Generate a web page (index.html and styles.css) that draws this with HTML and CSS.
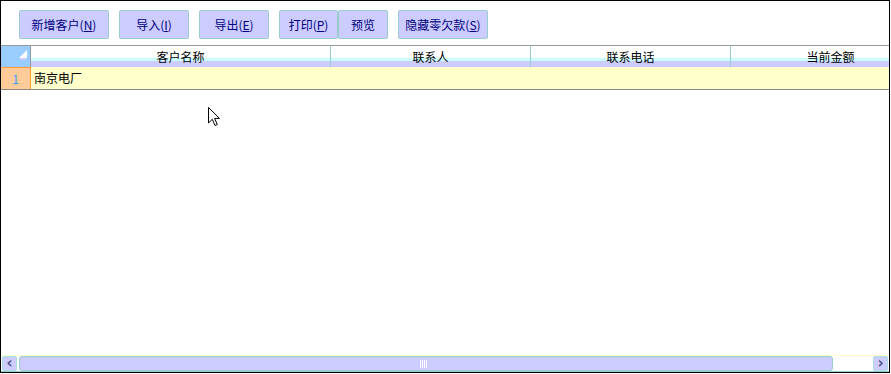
FILE: index.html
```html
<!DOCTYPE html>
<html lang="zh-CN">
<head>
  <meta charset="UTF-8" />
  <title>客户管理</title>
  <link rel="stylesheet" href="styles.css">
</head>
<body>
  <div class="window">
    <div class="toolbar">
      <button class="btn w90">新增客户(<u>N</u>)</button>
      <button class="btn w70">导入(<u>I</u>)</button>
      <button class="btn w70">导出(<u>E</u>)</button>
      <button class="btn w59 joined">打印(<u>P</u>)</button>
      <button class="btn w50">预览</button>
      <button class="btn w90">隐藏零欠款(<u>S</u>)</button>
    </div>

    <div class="grid">
      <div class="grid-head">
        <div class="corner"><span class="corner-tri"></span></div>
        <div class="hcell c300">客户名称</div>
        <div class="hcell c200">联系人</div>
        <div class="hcell c200">联系电话</div>
        <div class="hcell c200">当前金额</div>
      </div>
      <div class="grid-row">
        <div class="rownum">1</div>
        <div class="dcell">南京电厂</div>
      </div>
    </div>

    <div class="spacer"></div>

    <div class="hscroll">
      <div class="sbtn">&#8249;</div>
      <div class="thumb"><span class="grip"></span></div>
      <div class="track"></div>
      <div class="sbtn">&#8250;</div>
    </div>

    <svg class="cursor" width="13" height="20" viewBox="0 0 13 20">
      <path d="M0.5 0.5 L0.5 16 L4.3 12.3 L7 18.5 L9.3 17.5 L6.6 11.4 L11.5 11.4 Z" fill="#fff" stroke="#000" stroke-width="1"/>
    </svg>
  </div>
</body>
</html>
```

FILE: styles.css
```css
body {
  margin: 0;
  font-family: "Noto Sans CJK SC", "Liberation Sans", sans-serif;
  font-size: 12px;
  background: #fff;
}
.window {
  position: relative;
  box-sizing: border-box;
  width: 890px;
  height: 373px;
  border: 1px solid #000;
  display: flex;
  flex-direction: column;
  overflow: hidden;
}
.toolbar {
  height: 44px;
  box-sizing: border-box;
  padding: 9px 0 0 18px;
  display: flex;
  align-items: flex-start;
}
.btn {
  box-sizing: border-box;
  height: 29px;
  margin: 0 10px 0 0;
  padding: 0;
  border: 1px solid #99cccc;
  border-radius: 2px;
  background: #ccccff;
  color: #000080;
  font-family: inherit;
  font-size: 12px;
  line-height: 27px;
}
.btn.joined {
  margin-right: 0;
}
.w90 { width: 90px; }
.w70 { width: 70px; }
.w59 { width: 59px; }
.w50 { width: 50px; }

.grid {
  border-top: 1px solid #999;
  border-bottom: 1px solid #888;
}
.grid-head {
  display: flex;
  height: 21px;
  background: linear-gradient(to bottom, #fff 0 12px, #ccffff 12px 15px, #ccccff 15px);
}
.corner {
  position: relative;
  box-sizing: border-box;
  flex: none;
  width: 30px;
  background: #99ccff;
  border-right: 1px solid #999;
}
.corner-tri {
  position: absolute;
  left: 18px;
  top: 4px;
  width: 0;
  height: 0;
  border-left: 8px solid transparent;
  border-bottom: 8px solid #fff;
  box-shadow: 0 3px 0 -1px #ccccff;
}
.hcell {
  box-sizing: border-box;
  flex: none;
  height: 21px;
  line-height: 21px;
  text-align: center;
  color: #000;
  border-right: 1px solid #99cccc;
}
.c300 { width: 300px; }
.c200 { width: 200px; }

.grid-row {
  display: flex;
  height: 22px;
  background: #ffffcc;
}
.rownum {
  box-sizing: border-box;
  flex: none;
  width: 30px;
  background: #ffcc99;
  border-top: 1px solid #ff9933;
  border-right: 1px solid #ff9933;
  color: #3399ff;
  text-align: center;
  line-height: 21px;
}
.dcell {
  padding-left: 3px;
  line-height: 22px;
  color: #000;
}
.spacer {
  flex: 1;
}
.hscroll {
  height: 17px;
  box-sizing: border-box;
  border-top: 1px solid #ffffcc;
  border-bottom: 1px solid #99cccc;
  padding: 0 1px 0 1px;
  display: flex;
  align-items: stretch;
}
.sbtn {
  box-sizing: border-box;
  width: 15px;
  background: #ccccff;
  border: 1px solid #aadddd;
  border-radius: 2px;
  color: #555588;
  font-family: "DejaVu Sans", sans-serif;
  font-size: 15px;
  font-weight: bold;
  line-height: 12px;
  text-align: center;
}
.thumb {
  position: relative;
  box-sizing: border-box;
  width: 814px;
  margin-left: 2px;
  background: #ccccff;
  border: 1px solid #99cccc;
  border-radius: 3px;
}
.grip {
  position: absolute;
  left: 400px;
  top: 3px;
  width: 7px;
  height: 8px;
  background: repeating-linear-gradient(to right, #fff 0 1px, transparent 1px 2px);
}
.track {
  flex: 1;
  background: #fff;
}
.cursor {
  position: absolute;
  left: 207px;
  top: 106px;
}
```
